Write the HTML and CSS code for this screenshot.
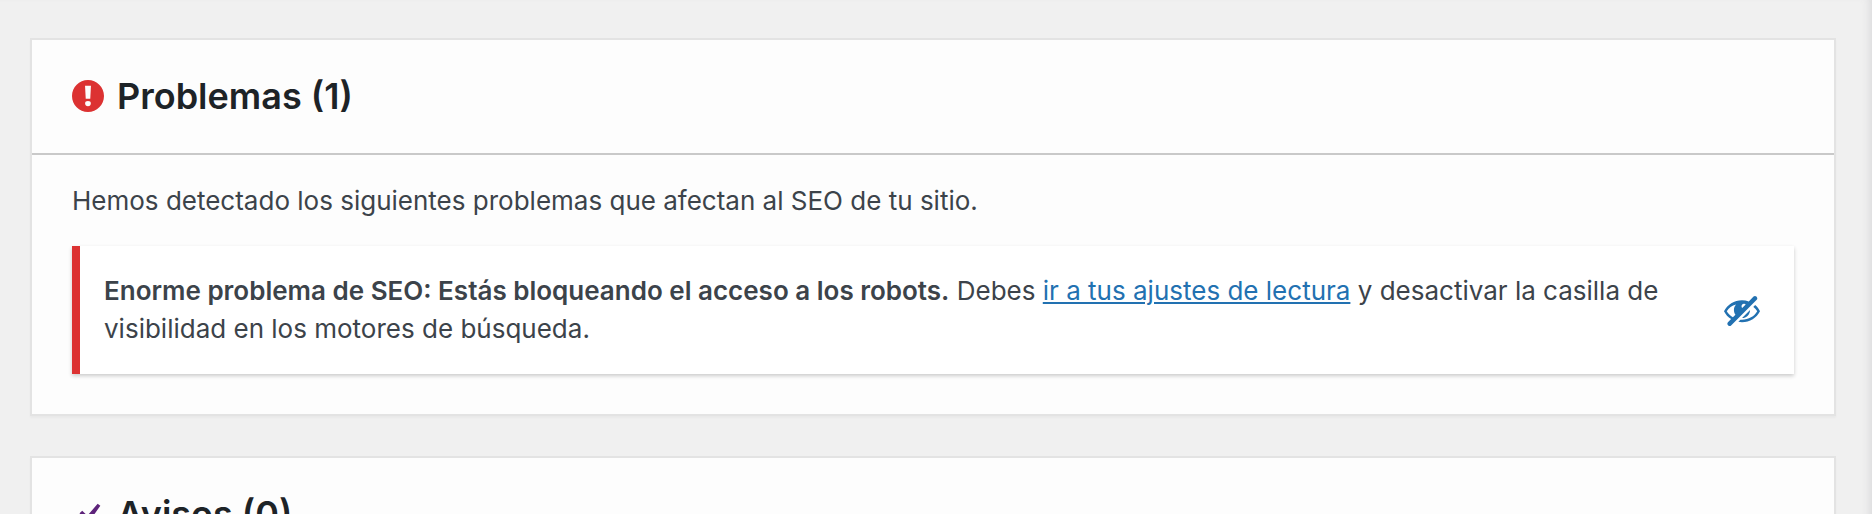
FILE: index.html
```html
<!DOCTYPE html>
<html lang="es">
<head>
<meta charset="utf-8">
<meta name="viewport" content="width=device-width, initial-scale=1">
<title>Problemas de SEO</title>
<link rel="stylesheet" href="styles.css">
</head>
<body>
<main class="page">
  <section class="card">
    <h2 class="card-title">
      <svg class="icon icon-error" viewBox="0 0 20 20" aria-hidden="true"><path d="M10 2c4.42 0 8 3.58 8 8s-3.58 8-8 8-8-3.58-8-8 3.58-8 8-8zm1.13 9.38l.35-6.46H8.52l.35 6.46h2.26zm-.09 3.36c.24-.23.37-.55.37-.96 0-.42-.12-.74-.36-.97s-.59-.35-1.06-.35-.82.12-1.07.35-.37.55-.37.97c0 .41.13.73.38.96.26.23.61.34 1.06.34s.8-.11 1.05-.34z"/></svg>
      <span>Problemas (1)</span>
    </h2>
    <div class="card-body">
      <p class="intro">Hemos detectado los siguientes problemas que afectan al SEO de tu sitio.</p>
      <div class="alert">
        <p class="alert-text"><strong>Enorme problema de SEO: Estás bloqueando el acceso a los robots.</strong> Debes <a class="link" href="#lectura">ir a tus ajustes de lectura</a> y desactivar la casilla de visibilidad en los motores de búsqueda.</p>
        <button class="hide-button" type="button" aria-label="Ocultar este elemento">
          <svg class="icon" viewBox="0 0 20 20" aria-hidden="true"><path d="M17.2 3.3l.16.17c.39.39.39 1.02 0 1.41L4.55 17.7c-.39.39-1.03.39-1.41 0l-.17-.17c-.39-.39-.39-1.02 0-1.41l1.59-1.6c-1.57-1-2.76-2.3-3.56-3.93.81-1.65 2.03-2.98 3.64-3.99S8.04 5.09 10 5.09c1.2 0 2.33.21 3.4.6l2.38-2.39c.39-.39 1.03-.39 1.42 0zm-7.09 4.01c-.23.25-.34.54-.34.88 0 .31.12.58.31.81l1.8-1.79c-.13-.12-.28-.21-.45-.26-.11-.01-.28-.03-.49-.04-.33.03-.6.16-.83.4zM2.4 10.59c.69 1.23 1.71 2.25 3.05 3.05l1.28-1.28c-.51-.69-.77-1.47-.77-2.36 0-1.06.36-1.98 1.09-2.76-1.04.27-1.96.7-2.76 1.26-.8.58-1.43 1.27-1.89 2.09zm13.22-2.13l.96-.96c1.02.86 1.83 1.89 2.42 3.09-.81 1.65-2.03 2.98-3.64 3.99s-3.4 1.51-5.36 1.51c-.63 0-1.24-.07-1.83-.18l1.07-1.07c.25.02.5.05.76.05 1.63 0 3.13-.4 4.5-1.21s2.4-1.84 3.1-3.09c-.46-.82-1.09-1.51-1.89-2.09-.03-.01-.06-.03-.09-.04zm-5.58 5.58l4-4c-.01 1.1-.41 2.04-1.18 2.81-.78.78-1.72 1.18-2.82 1.19z"/></svg>
        </button>
      </div>
    </div>
  </section>
  <section class="card">
    <h2 class="card-title">
      <svg class="icon icon-ok" viewBox="0 0 20 20" aria-hidden="true"><path d="M14.83 4.89l1.34.94-5.81 8.38H9.02L5.78 9.67l1.34-1.25 2.57 2.4z"/></svg>
      <span>Avisos (0)</span>
    </h2>
  </section>
</main>
</body>
</html>
```
FILE: styles.css
```css
* {
  box-sizing: border-box;
}

html {
  height: 100%;
}

body {
  height: 100%;
  margin: 0;
  overflow: hidden;
  background: #f0f0f0;
  color: #3c434a;
  font: 26px/38px Inter, "Liberation Sans", sans-serif;
}

.page {
  display: flex;
  flex-direction: column;
  gap: 40px;
  min-height: 100%;
  padding: 38px 36px 0 30px;
  box-shadow: inset -8px 0 8px -6px #d8d8da;
}

.card {
  background: #fdfdfd;
  border: 2px solid #e3e3e3;
  box-shadow: 0 2px 2px rgba(0, 0, 0, 0.03);
}

.card-title {
  display: flex;
  align-items: center;
  gap: 9px;
  margin: 0;
  padding: 36px 36px 37px;
  color: #1d2327;
  font-size: 36px;
  font-weight: 600;
  line-height: 40px;
}

.icon {
  display: block;
  flex: none;
  width: 40px;
  height: 40px;
  fill: currentColor;
}

.icon-error {
  color: #dc3232;
}

.icon-ok {
  color: #5d237a;
}

.card-body {
  padding: 27px 40px 40px;
  border-top: 2px solid #c9c9c9;
}

.intro {
  margin: 0 0 26px;
}

.alert {
  display: flex;
  align-items: center;
  justify-content: space-between;
  gap: 60px;
  padding: 26px 32px 26px 24px;
  background: #fff;
  border-left: 8px solid #dc3232;
  box-shadow: 0 2px 4px rgba(0, 0, 0, 0.2);
}

.alert-text {
  margin: 0;
}

.alert-text strong {
  font-weight: 600;
}

.link {
  color: #2271b1;
  text-decoration-thickness: 2px;
  text-underline-offset: 2px;
}

.hide-button {
  flex: none;
  padding: 0;
  border: 0;
  background: none;
  color: #2271b1;
  cursor: pointer;
}
```
